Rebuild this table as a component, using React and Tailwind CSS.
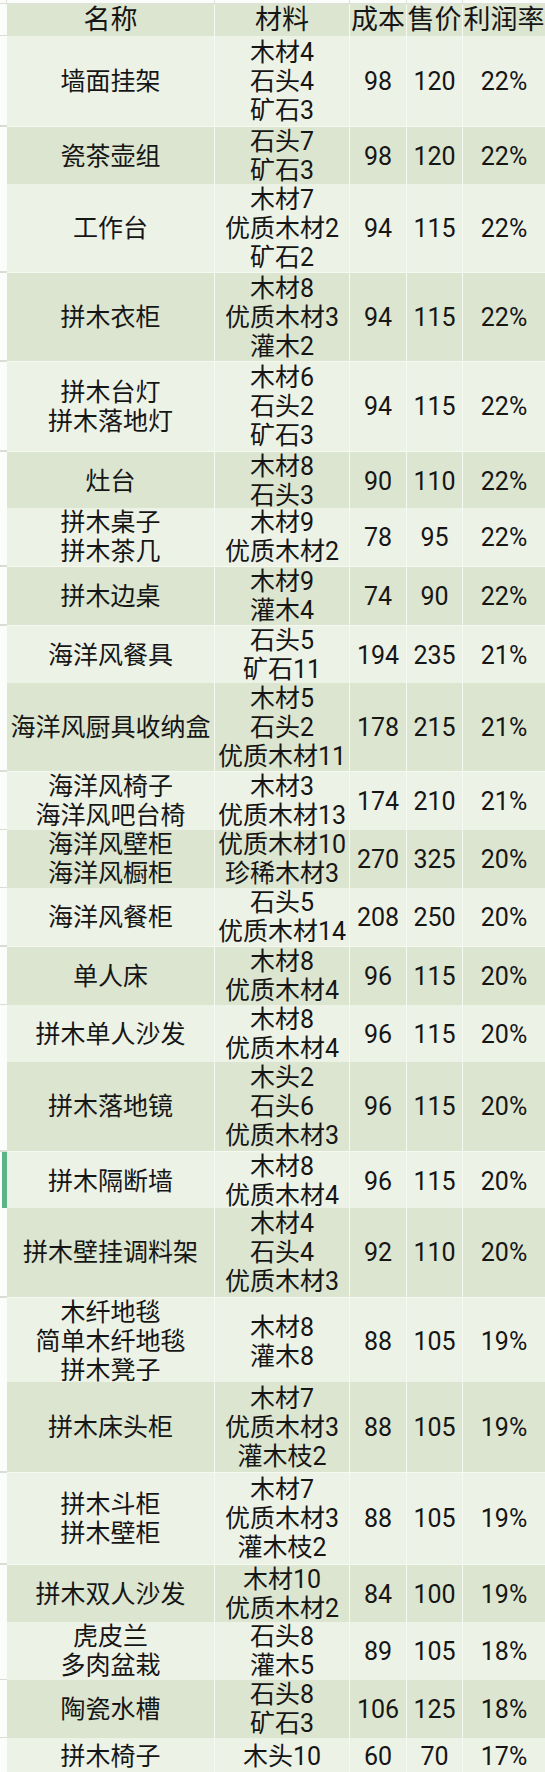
import React from 'react';

// 每行：名称（可多行）、材料、成本、售价、利润率、行高、是否深色底
const ROWS = [
  { names: ['墙面挂架'], mats: ['木材4', '石头4', '矿石3'], cost: 98, price: 120, rate: '22%', h: 'h-[91px]', dark: false },
  { names: ['瓷茶壶组'], mats: ['石头7', '矿石3'], cost: 98, price: 120, rate: '22%', h: 'h-[57px]', dark: true },
  { names: ['工作台'], mats: ['木材7', '优质木材2', '矿石2'], cost: 94, price: 115, rate: '22%', h: 'h-[89px]', dark: false },
  { names: ['拼木衣柜'], mats: ['木材8', '优质木材3', '灌木2'], cost: 94, price: 115, rate: '22%', h: 'h-[89px]', dark: true },
  { names: ['拼木台灯', '拼木落地灯'], mats: ['木材6', '石头2', '矿石3'], cost: 94, price: 115, rate: '22%', h: 'h-[90px]', dark: false },
  { names: ['灶台'], mats: ['木材8', '石头3'], cost: 90, price: 110, rate: '22%', h: 'h-[56px]', dark: true },
  { names: ['拼木桌子', '拼木茶几'], mats: ['木材9', '优质木材2'], cost: 78, price: 95, rate: '22%', h: 'h-[59px]', dark: false },
  { names: ['拼木边桌'], mats: ['木材9', '灌木4'], cost: 74, price: 90, rate: '22%', h: 'h-[59px]', dark: true },
  { names: ['海洋风餐具'], mats: ['石头5', '矿石11'], cost: 194, price: 235, rate: '21%', h: 'h-[57px]', dark: false },
  { names: ['海洋风厨具收纳盒'], mats: ['木材5', '石头2', '优质木材11'], cost: 178, price: 215, rate: '21%', h: 'h-[89px]', dark: true },
  { names: ['海洋风椅子', '海洋风吧台椅'], mats: ['木材3', '优质木材13'], cost: 174, price: 210, rate: '21%', h: 'h-[58px]', dark: false },
  { names: ['海洋风壁柜', '海洋风橱柜'], mats: ['优质木材10', '珍稀木材3'], cost: 270, price: 325, rate: '20%', h: 'h-[58px]', dark: true },
  { names: ['海洋风餐柜'], mats: ['石头5', '优质木材14'], cost: 208, price: 250, rate: '20%', h: 'h-[59px]', dark: false },
  { names: ['单人床'], mats: ['木材8', '优质木材4'], cost: 96, price: 115, rate: '20%', h: 'h-[58px]', dark: true },
  { names: ['拼木单人沙发'], mats: ['木材8', '优质木材4'], cost: 96, price: 115, rate: '20%', h: 'h-[57px]', dark: false },
  { names: ['拼木落地镜'], mats: ['木头2', '石头6', '优质木材3'], cost: 96, price: 115, rate: '20%', h: 'h-[90px]', dark: true },
  { names: ['拼木隔断墙'], mats: ['木材8', '优质木材4'], cost: 96, price: 115, rate: '20%', h: 'h-[56px]', dark: false, marked: true },
  { names: ['拼木壁挂调料架'], mats: ['木材4', '石头4', '优质木材3'], cost: 92, price: 110, rate: '20%', h: 'h-[90px]', dark: true },
  { names: ['木纤地毯', '简单木纤地毯', '拼木凳子'], mats: ['木材8', '灌木8'], cost: 88, price: 105, rate: '19%', h: 'h-[84px]', dark: false },
  { names: ['拼木床头柜'], mats: ['木材7', '优质木材3', '灌木枝2'], cost: 88, price: 105, rate: '19%', h: 'h-[91px]', dark: true },
  { names: ['拼木斗柜', '拼木壁柜'], mats: ['木材7', '优质木材3', '灌木枝2'], cost: 88, price: 105, rate: '19%', h: 'h-[92px]', dark: false },
  { names: ['拼木双人沙发'], mats: ['木材10', '优质木材2'], cost: 84, price: 100, rate: '19%', h: 'h-[57px]', dark: true },
  { names: ['虎皮兰', '多肉盆栽'], mats: ['石头8', '灌木5'], cost: 89, price: 105, rate: '18%', h: 'h-[58px]', dark: false },
  { names: ['陶瓷水槽'], mats: ['石头8', '矿石3'], cost: 106, price: 125, rate: '18%', h: 'h-[58px]', dark: true },
  { names: ['拼木椅子'], mats: ['木头10'], cost: 60, price: 70, rate: '17%', h: 'h-[38px]', dark: false },
];

const GRID = 'grid grid-cols-[7px_208px_135px_57px_56px_82px]';

function Cell({ lines, bg, last }) {
  return (
    <div
      className={`flex flex-col items-center justify-center whitespace-nowrap border-b border-[#f6f9f1] ${bg} ${
        last ? '' : 'border-r'
      }`}
    >
      {lines.map((t, i) => (
        <span key={i}>{t}</span>
      ))}
    </div>
  );
}

function Row({ row }) {
  const bg = row.dark ? 'bg-[#dce5cf]' : 'bg-[#edf2e7]';
  return (
    <div className={`${GRID} ${row.h}`}>
      {/* 行号栏 */}
      <div className="flex border-b-2 border-[#d9ddd6] bg-[#fbfdfa]">
        {row.marked && <div className="ml-[2px] w-[5px] bg-[#5bb487]" />}
      </div>
      <Cell lines={row.names} bg={bg} />
      <Cell lines={row.mats} bg={bg} />
      <Cell lines={[row.cost]} bg={bg} />
      <Cell lines={[row.price]} bg={bg} />
      <Cell lines={[row.rate]} bg={bg} last />
    </div>
  );
}

export default function App() {
  return (
    <div
      className="h-[1772px] w-[545px] overflow-hidden bg-white text-[25px] leading-[29px] text-[#161616]"
      style={{ fontFamily: 'Roboto, "Noto Sans CJK SC", sans-serif' }}
    >
      {/* 顶部列号栏 */}
      <div className={`${GRID} h-[4px] border-b border-[#dde1da] bg-[#fbfdfa]`}>
        <div className="border-r border-[#dde1da]" />
        <div className="border-r border-[#dde1da]" />
        <div className="border-r border-[#dde1da]" />
        <div className="border-r border-[#dde1da]" />
        <div className="border-r border-[#dde1da]" />
        <div />
      </div>

      {/* 表头 */}
      <div className={`${GRID} h-[32px] text-[27px] leading-[32px]`}>
        <div className="border-b-2 border-[#d9ddd6] bg-[#fbfdfa]" />
        {['名称', '材料', '成本', '售价', '利润率'].map((t, i) => (
          <div
            key={t}
            className={`flex items-center justify-center whitespace-nowrap border-b border-[#f6f9f1] bg-[#dce5cf] ${
              i < 4 ? 'border-r' : ''
            }`}
          >
            {t}
          </div>
        ))}
      </div>

      {ROWS.map((row, i) => (
        <Row key={i} row={row} />
      ))}
    </div>
  );
}
